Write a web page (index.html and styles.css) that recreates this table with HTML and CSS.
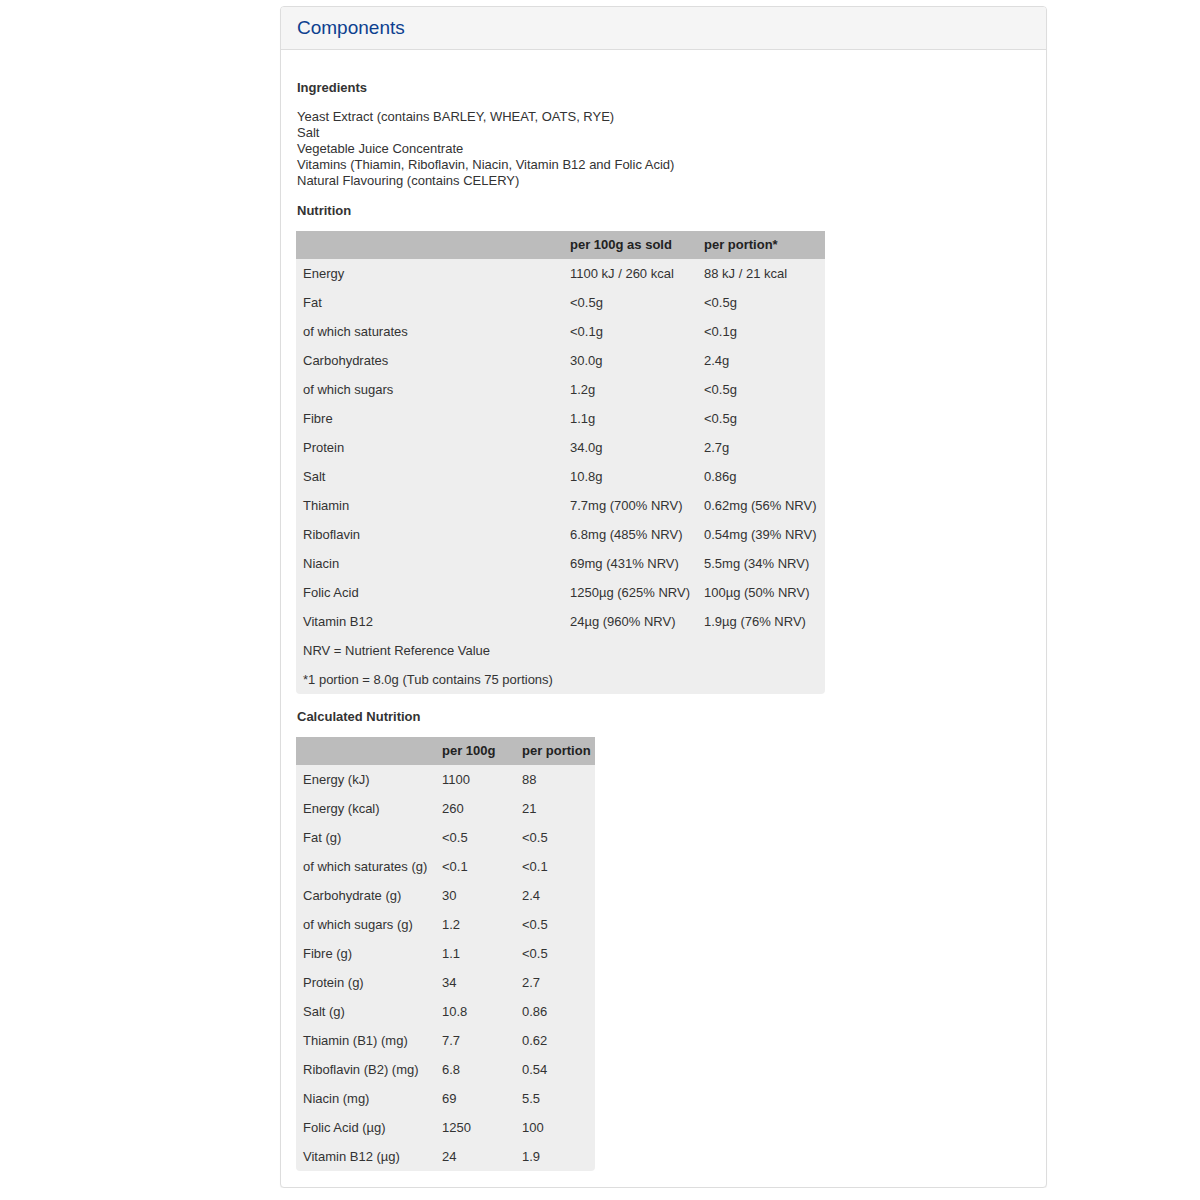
FILE: index.html
```html
<!DOCTYPE html>
<html>
<head>
<meta charset="utf-8">
<link rel="stylesheet" href="styles.css">
</head>
<body>
<div class="panel">
  <div class="panel-head"><h2 class="panel-title">Components</h2></div>
  <div class="panel-body">
    <h4 class="sec">Ingredients</h4>
    <div class="ingr">
      Yeast Extract (contains BARLEY, WHEAT, OATS, RYE)<br>
      Salt<br>
      Vegetable Juice Concentrate<br>
      Vitamins (Thiamin, Riboflavin, Niacin, Vitamin B12 and Folic Acid)<br>
      Natural Flavouring (contains CELERY)
    </div>
    <h4 class="sec sec-t">Nutrition</h4>
    <table class="nt nt1">
      <colgroup><col class="c1a"><col class="c2a"><col class="c3a"></colgroup>
      <thead><tr><th></th><th>per 100g as sold</th><th>per portion*</th></tr></thead>
      <tbody>
        <tr><td>Energy</td><td>1100 kJ / 260 kcal</td><td>88 kJ / 21 kcal</td></tr>
        <tr><td>Fat</td><td>&lt;0.5g</td><td>&lt;0.5g</td></tr>
        <tr><td>of which saturates</td><td>&lt;0.1g</td><td>&lt;0.1g</td></tr>
        <tr><td>Carbohydrates</td><td>30.0g</td><td>2.4g</td></tr>
        <tr><td>of which sugars</td><td>1.2g</td><td>&lt;0.5g</td></tr>
        <tr><td>Fibre</td><td>1.1g</td><td>&lt;0.5g</td></tr>
        <tr><td>Protein</td><td>34.0g</td><td>2.7g</td></tr>
        <tr><td>Salt</td><td>10.8g</td><td>0.86g</td></tr>
        <tr><td>Thiamin</td><td>7.7mg (700% NRV)</td><td>0.62mg (56% NRV)</td></tr>
        <tr><td>Riboflavin</td><td>6.8mg (485% NRV)</td><td>0.54mg (39% NRV)</td></tr>
        <tr><td>Niacin</td><td>69mg (431% NRV)</td><td>5.5mg (34% NRV)</td></tr>
        <tr><td>Folic Acid</td><td>1250µg (625% NRV)</td><td>100µg (50% NRV)</td></tr>
        <tr><td>Vitamin B12</td><td>24µg (960% NRV)</td><td>1.9µg (76% NRV)</td></tr>
        <tr><td colspan="3">NRV = Nutrient Reference Value</td></tr>
        <tr><td colspan="3">*1 portion = 8.0g (Tub contains 75 portions)</td></tr>
      </tbody>
    </table>
    <h4 class="sec sec-t">Calculated Nutrition</h4>
    <table class="nt nt2">
      <colgroup><col class="c1b"><col class="c2b"><col class="c3b"></colgroup>
      <thead><tr><th></th><th>per 100g</th><th>per portion</th></tr></thead>
      <tbody>
        <tr><td>Energy (kJ)</td><td>1100</td><td>88</td></tr>
        <tr><td>Energy (kcal)</td><td>260</td><td>21</td></tr>
        <tr><td>Fat (g)</td><td>&lt;0.5</td><td>&lt;0.5</td></tr>
        <tr><td>of which saturates (g)</td><td>&lt;0.1</td><td>&lt;0.1</td></tr>
        <tr><td>Carbohydrate (g)</td><td>30</td><td>2.4</td></tr>
        <tr><td>of which sugars (g)</td><td>1.2</td><td>&lt;0.5</td></tr>
        <tr><td>Fibre (g)</td><td>1.1</td><td>&lt;0.5</td></tr>
        <tr><td>Protein (g)</td><td>34</td><td>2.7</td></tr>
        <tr><td>Salt (g)</td><td>10.8</td><td>0.86</td></tr>
        <tr><td>Thiamin (B1) (mg)</td><td>7.7</td><td>0.62</td></tr>
        <tr><td>Riboflavin (B2) (mg)</td><td>6.8</td><td>0.54</td></tr>
        <tr><td>Niacin (mg)</td><td>69</td><td>5.5</td></tr>
        <tr><td>Folic Acid (µg)</td><td>1250</td><td>100</td></tr>
        <tr><td>Vitamin B12 (µg)</td><td>24</td><td>1.9</td></tr>
      </tbody>
    </table>
  </div>
</div>
</body>
</html>
```
FILE: styles.css
```css
html, body {
  margin: 0;
  padding: 0;
  background: #fff;
}
body {
  font-family: "Liberation Sans", Arial, sans-serif;
  font-size: 13px;
  line-height: 16px;
  color: #333;
}
.panel {
  box-sizing: border-box;
  width: 767px;
  margin: 6px 0 0 280px;
  border: 1px solid #ddd;
  border-radius: 4px;
  box-shadow: 0 1px 1px rgba(0,0,0,0.05);
  background: #fff;
}
.panel-head {
  height: 42px;
  background: #f5f5f5;
  border-bottom: 1px solid #ddd;
  border-radius: 3px 3px 0 0;
  padding: 0 16px;
  display: flex;
  align-items: center;
}
.panel-title {
  margin: 0;
  font-size: 19px;
  font-weight: normal;
  line-height: 22px;
  color: #0d3f8f;
}
.panel-body {
  padding: 30px 15px 16px 15px;
}
.sec {
  margin: 0 0 13px 1px;
  font-size: 13px;
  font-weight: bold;
  line-height: 16px;
}
.sec-t {
  margin-bottom: 12px;
}
.ingr {
  margin: 0 0 14px 1px;
}
.nt {
  border-collapse: separate;
  border-spacing: 0;
  table-layout: fixed;
  background: #eee;
  border-radius: 0 0 4px 4px;
}
.nt th, .nt td {
  padding: 0 7px;
  text-align: left;
  white-space: nowrap;
  overflow: visible;
}
.nt th {
  height: 28px;
  background: #bcbcbc;
  font-weight: bold;
  color: #222;
}
.nt td {
  height: 29px;
}
.nt1 {
  width: 529px;
  margin-bottom: 15px;
}
.c1a { width: 267px; }
.c2a { width: 134px; }
.c3a { width: 128px; }
.nt2 {
  width: 299px;
}
.c1b { width: 139px; }
.c2b { width: 80px; }
.c3b { width: 80px; }
```
